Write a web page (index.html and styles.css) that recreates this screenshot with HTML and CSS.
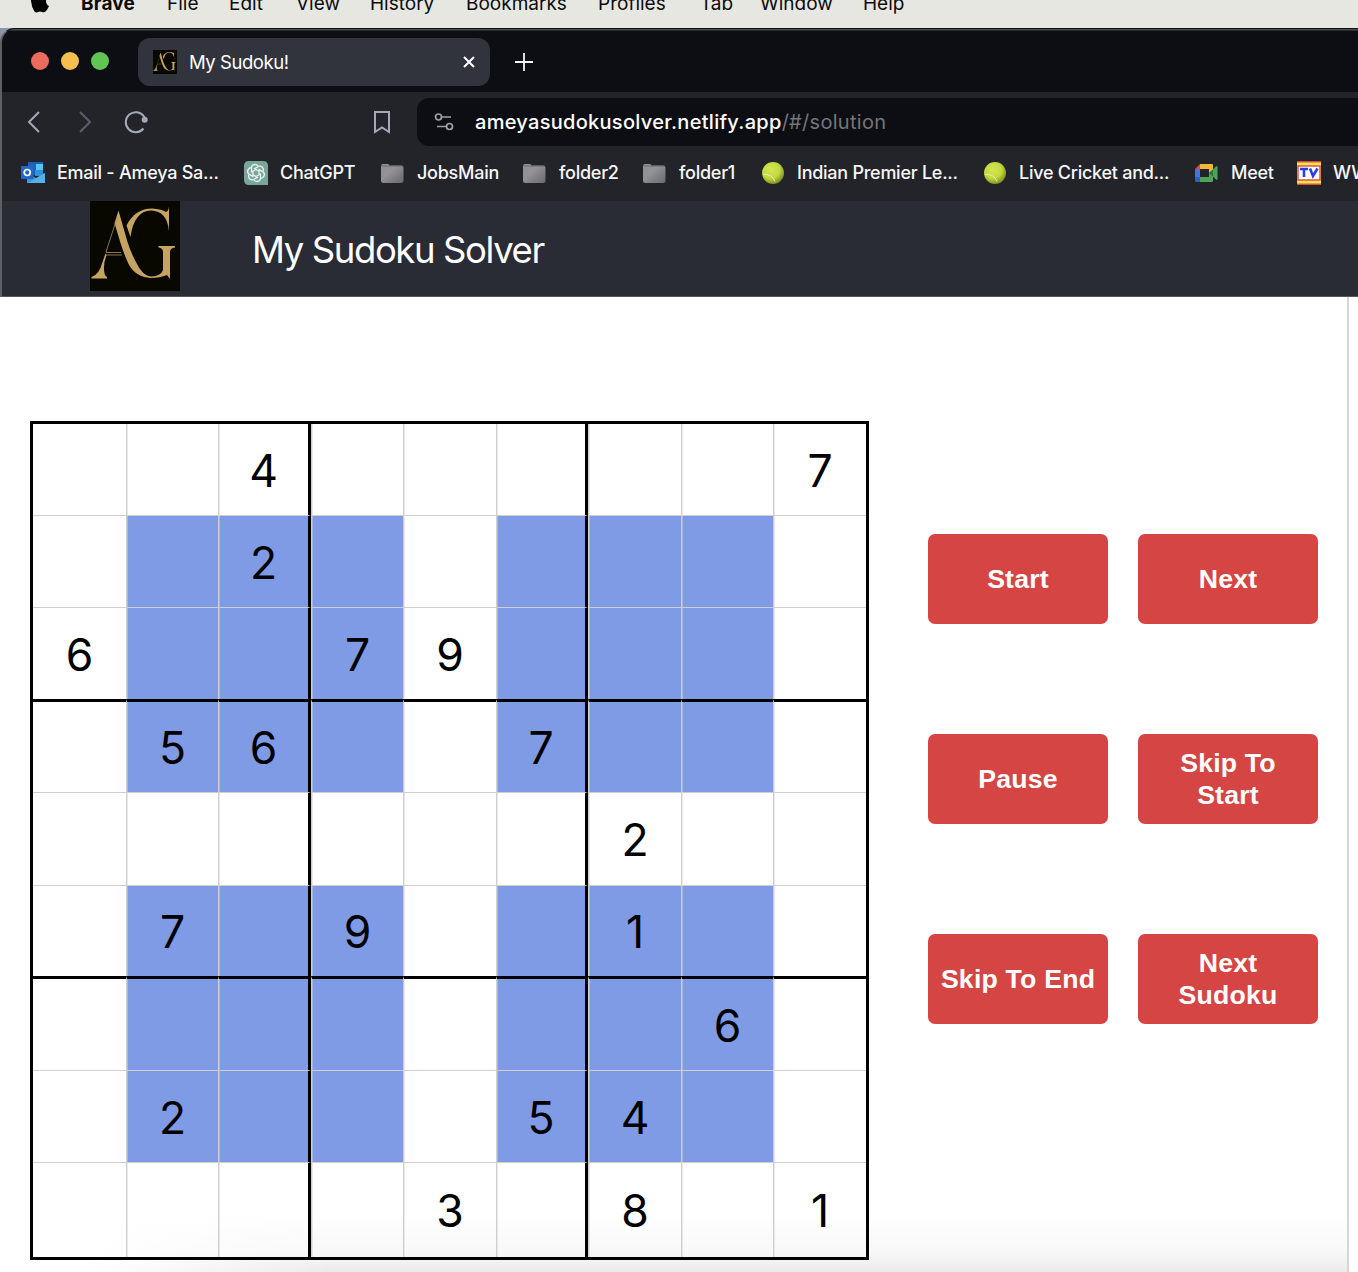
FILE: index.html
```
<!DOCTYPE html>
<html lang="en">
<head>
<meta charset="utf-8">
<title>My Sudoku!</title>
<link rel="stylesheet" href="styles.css">
</head>
<body>
<svg class="defs" width="0" height="0" aria-hidden="true">
  <defs>
    <linearGradient id="folderFill" x1="0" y1="0" x2="1" y2="1"><stop offset="0" stop-color="#8f8f94"/><stop offset=".4" stop-color="#929297"/><stop offset="1" stop-color="#69696c"/></linearGradient>
    <radialGradient id="ballFill" cx=".4" cy=".35" r=".65"><stop offset="0" stop-color="#d3e652"/><stop offset=".6" stop-color="#c4d940"/><stop offset="1" stop-color="#829321"/></radialGradient>
    <symbol id="folder" viewBox="0 0 24 24"><path d="M0 5q0-2 2-2h5q1 0 1.500 1.500H20q2.500 0 2.500 2.500v12.500q0 2.500-2.500 2.500H2.500Q0 22 0 19.500z" fill="url(#folderFill)"/><path d="M0 5h22" stroke="#5d5d61" stroke-width=".7"/></symbol>
    <symbol id="ball" viewBox="0 0 24 24"><circle cx="12" cy="12" r="11" fill="url(#ballFill)"/><path d="M2 13.500Q11 12.500 14 20.500" fill="none" stroke="#e5edb0" stroke-width="1"/></symbol>
    <symbol id="monogram" viewBox="0 0 90 90">
      <rect width="90" height="90" fill="#080800"/>
      <g fill="#c5a363">
        <path d="M28.500 9.500L37.500 41Q41 52 46.500 62Q52 74 61 76Q46 77 38.500 63Q34 53 30.500 42L24.500 22z"/>
        <path d="M1.500 76Q9 74 12.500 61L15.500 52.500L16.500 54Q13.500 62 14 69Q14.500 75 17 76V77.500H1.500z"/>
        <path d="M36.500 24.500Q45 7.500 62 7.500Q72 8 76 11Q78.500 10 79 5.500V30Q77 10 61 9.500Q44 10 40.500 36z"/>
        <path d="M68.500 45H85V46.500Q80 47 80 51V78L77 74Q70 77 60 77Q49 77 41 64Q49 76 61 75.500Q71 75 73 69V51Q73 47 68.500 46.500z"/>
      </g>
      <path d="M27 17L16 51M16 51.500H31M15 54H32" stroke="#a98f56" stroke-width=".8" fill="none"/>
    </symbol>
  </defs>
</svg>

<nav class="menubar">
  <svg class="apple" width="20" height="24" viewBox="0 0 20 24"><path d="M14 5q-2 0-4 1.200Q8 5 6 5Q1 5.500 1 12Q1.500 18 4.500 22.500Q6 24 8 23Q10 22 12 23Q14.500 24 16 22Q18 19.500 19 17Q16 15.500 16 12Q16 9 18.500 7Q17 5 14 5zM10 4Q10 0 14 0Q14 4 10 4z" fill="#000"/></svg>
  <span class="app">Brave</span><span>File</span><span>Edit</span><span>View</span><span>History</span><span>Bookmarks</span><span>Profiles</span><span>Tab</span><span>Window</span><span>Help</span>
</nav>

<div class="desktop">
<div class="window">
  <div class="tabstrip">
    <div class="lights"><i class="red"></i><i class="yellow"></i><i class="green"></i></div>
    <div class="tab">
      <svg width="24" height="24"><use href="#monogram"/></svg>
      <span class="tab-title">My Sudoku!</span>
      <svg width="12" height="12" viewBox="0 0 12 12"><path d="M1 1L11 11M11 1L1 11" stroke="#fff" stroke-width="2"/></svg>
    </div>
    <svg class="newtab" width="18" height="18" viewBox="0 0 18 18"><path d="M0 9H18M9 0V18" stroke="#f4f4f6" stroke-width="1.800"/></svg>
  </div>

  <div class="toolbar">
    <svg width="14" height="22" viewBox="0 0 14 22"><path d="M12 1L2 11L12 21" fill="none" stroke="#a4a9b7" stroke-width="2"/></svg>
    <svg class="forward" width="14" height="22" viewBox="0 0 14 22"><path d="M2 1L12 11L2 21" fill="none" stroke="#5c5f69" stroke-width="2"/></svg>
    <svg class="reload" width="24" height="24" viewBox="0 0 24 24"><path d="M19.500 18.500A10 10 0 1 1 20 6.500L21 9" fill="none" stroke="#a4a9b7" stroke-width="2"/><circle cx="20.700" cy="9.700" r="3" fill="#a4a9b7"/></svg>
    <svg class="flag" width="18" height="24" viewBox="0 0 18 24"><path d="M2 2H16V22L9 17.500L2 22z" fill="none" stroke="#a4a9b7" stroke-width="2"/></svg>
    <div class="address">
      <svg width="20" height="20" viewBox="0 0 20 20"><g fill="none" stroke="#a0a1a6" stroke-width="1.700"><circle cx="4.500" cy="5" r="3"/><path d="M8 5H17M3 14.500H12"/><circle cx="15.500" cy="14.500" r="3"/></g></svg>
      <span class="url"><b>ameyasudokusolver.netlify.app</b>/#/solution</span>
    </div>
  </div>

  <div class="bookmarks">
    <div class="bm"><svg width="24" height="24" viewBox="0 0 24 24"><path d="M7 1H22V14H7z" fill="#1d5fb5"/><path d="M7 3H15V9H7z" fill="#2263ba"/><path d="M15 3H22V9H15z" fill="#55c5f3"/><path d="M14 9H22V15H14z" fill="#2f91dd"/><path d="M6 12L15 17L24 12V22H6z" fill="#3f94dc"/><path d="M7 22L24 12V22z" fill="#56b0ea"/><rect y="5" width="12.500" height="13" rx="1" fill="#2468c5"/><circle cx="6.200" cy="11.500" r="3" fill="none" stroke="#fff" stroke-width="1.700"/></svg><span>Email - Ameya Sa...</span></div>
    <div class="bm"><svg width="24" height="24" viewBox="0 0 24 24"><path d="M5 0H19Q24 0 24 5V24H5Q0 24 0 19V5Q0 0 5 0z" fill="#7aa699"/><g fill="none" stroke="#e8f1ee" stroke-width="1.300"><g id="petal"><path d="M12 8.500L7.500 11V6.500Q8 3.500 11 3.500Q13 3.500 14 5"/></g><use href="#petal" transform="rotate(60 12 12)"/><use href="#petal" transform="rotate(120 12 12)"/><use href="#petal" transform="rotate(180 12 12)"/><use href="#petal" transform="rotate(240 12 12)"/><use href="#petal" transform="rotate(300 12 12)"/></g></svg><span>ChatGPT</span></div>
    <div class="bm"><svg width="24" height="24"><use href="#folder"/></svg><span>JobsMain</span></div>
    <div class="bm"><svg width="24" height="24"><use href="#folder"/></svg><span>folder2</span></div>
    <div class="bm"><svg width="24" height="24"><use href="#folder"/></svg><span>folder1</span></div>
    <div class="bm"><svg width="24" height="24"><use href="#ball"/></svg><span>Indian Premier Le...</span></div>
    <div class="bm"><svg width="24" height="24"><use href="#ball"/></svg><span>Live Cricket and...</span></div>
    <div class="bm"><svg width="24" height="24" viewBox="0 0 24 24"><path d="M0 8L5 3V8z" fill="#d94b3d"/><path d="M5 3H17Q18 3 18 4V12H14V8H5z" fill="#f0b73c"/><path d="M0 8H5V16H0z" fill="#3f78de"/><path d="M0 16H5V21H1Q0 21 0 20z" fill="#2d5fc4"/><path d="M5 16H14V12L18 9V20Q18 21 17 21H5z" fill="#4ea35a"/><path d="M14 12L21 5.500Q22.500 4.500 22.500 6V18Q22.500 19.500 21 18.500z" fill="#4ea35a"/><path d="M14 12L18 8.500V15.500z" fill="#2b7440"/></svg><span>Meet</span></div>
    <div class="bm"><svg width="24" height="24" viewBox="0 0 24 24"><rect width="24" height="24" fill="#f4e45c"/><path d="M0 .8H24M0 23.200H24" stroke="#dd4a36" stroke-width="1.500"/><rect x="1" y="5" width="22" height="14" fill="#fff" stroke="#e2543c" stroke-width="1.500"/><path d="M3 8H11M7 8V16M13 7.500L16 15L20.500 7.500" fill="none" stroke="#2b3fe0" stroke-width="2.600"/></svg><span>WWE</span></div>
  </div>

  <header class="site-header">
    <svg width="90" height="90"><use href="#monogram"/></svg>
    <h1>My Sudoku Solver</h1>
  </header>
</div>
</div>

<main class="page">
  <div class="board" id="board"></div>
  <div class="controls">
    <button>Start</button><button>Next</button>
    <button>Pause</button><button>Skip To Start</button>
    <button>Skip To End</button><button>Next Sudoku</button>
  </div>
</main>
<script src="board.js"></script>
</body>
</html>
```
FILE: styles.css
```
* { box-sizing: border-box; }
body { margin: 0; width: 1358px; height: 1272px; overflow: hidden; background: #fff; font-family: Inter, "Liberation Sans", sans-serif; display: flex; flex-direction: column; }
svg { display: block; flex: none; }
.defs { position: absolute; }

.menubar { height: 28px; flex: none; overflow: hidden; background: #e7e7e1; padding-left: 29px; display: grid; grid-template-columns: 52px 86px 62px 67px 74px 96px 132px 102px 60px 103px 80px; align-items: start; color: #0b0b0b; font-size: 19px; line-height: 24px; white-space: nowrap; }
.menubar span { margin-top: -8px; }
.menubar .app { font-weight: 700; letter-spacing: .2px; }
.apple { margin-top: -11px; margin-left: 1px; }

.desktop { flex: none; height: 269px; background: linear-gradient(#8d99ab, #5b5e66 40px); }
.window { height: 269px; border-top: 1px solid #111; border-left: 2px solid #5e5f63; border-top-left-radius: 15px; background: #0d0e13; overflow: hidden; }

.tabstrip { height: 63px; display: flex; align-items: center; padding-left: 29px; box-shadow: inset 0 1.500px 0 #4a4b50; }
.lights { display: flex; gap: 12px; width: 107px; }
.lights i { width: 18px; height: 18px; border-radius: 50%; }
.red { background: #ed6a5f; }
.yellow { background: #f5bf4f; }
.green { background: #61c554; }
.tab { width: 352px; height: 48px; border-radius: 12px; background: #31333d; display: flex; align-items: center; padding: 0 15px; margin-top: 3px; }
.tab-title { color: #fff; font-size: 18.500px; letter-spacing: -.45px; margin-left: 12px; flex: 1; }
.newtab { margin: 3px 0 0 25px; }

.toolbar { height: 54px; background: #23242a; display: flex; align-items: center; padding: 6px 0 0 25px; }
.forward { margin-left: 37px; }
.reload { margin-left: 32px; }
.flag { margin-left: 225px; }
.address { margin-left: 26px; flex: 1; height: 48px; border-radius: 12px 0 0 12px; background: #0d0e13; display: flex; align-items: center; padding-left: 17px; }
.url { margin-left: 21px; font-size: 20px; letter-spacing: .29px; color: #74757a; white-space: nowrap; }
.url b { color: #fff; font-weight: 500; }

.bookmarks { height: 55px; background: #23242a; display: grid; grid-template-columns: 223px 137px 142px 120px 118px 222px 212px 102px 100px; padding: 0 0 2px 19px; align-items: center; }
.bm { display: flex; align-items: center; gap: 12px; color: #f7f7f8; font-size: 18px; font-weight: 500; letter-spacing: -.26px; white-space: nowrap; }
.bm span { margin-top: -1px; }

.site-header { height: 96px; background: #2a2c35; border-bottom: 1px solid #55575d; padding-left: 88px; display: flex; align-items: flex-start; }
.site-header h1 { margin: 26px 0 0 72px; color: #fff; font-size: 36.500px; letter-spacing: -1.400px; line-height: 46px; font-weight: 400; }

.page { flex: none; height: 975px; width: 1349px; border-right: 2px solid #d6d6d6; padding: 124px 0 0 30px; display: flex; align-items: flex-start; background: linear-gradient(to right, #fff 90px, #fff0 330px), linear-gradient(#fff 915px, #f8f8f8 955px, #ebebeb); }
.board { width: 839px; height: 839px; border: 3px solid #000; display: grid; grid-template-columns: 93px 92px 93px 92px 93px 92px 93px 92px 93px; grid-template-rows: 91px 92px 92px 93px 93px 91px 94px 92px 95px; }
.cell { border-left: 1px solid #cfcfcf; border-top: 1px solid #cfcfcf; box-shadow: inset 1px 0 0 #d3d3d380; padding-top: 3px; display: flex; align-items: center; justify-content: center; font-size: 44.500px; line-height: 1; color: #000; }
.shade { background-color: #809be5; }
.first-col { border-left: 0; box-shadow: none; }
.first-row { border-top: 0; }
.box-top { border-top: 3px solid #000; }
.box-right { border-right: 3px solid #000; }

.controls { margin: 113px 0 0 59px; display: grid; grid-template-columns: 180px 180px; grid-auto-rows: 90px; column-gap: 30px; row-gap: 110px; }
.controls button { border: 0; border-radius: 7px; background: #d54543; color: #fff; font: bold 26.670px/31.500px "Liberation Sans", Arial, sans-serif; letter-spacing: .2px; padding: 1px 10px 0; }
```
FILE: board.js
```
// Digits by row; a dot is an empty cell.
const puzzle = [
  "..4.....7",
  "..2......",
  "6..79....",
  ".56..7...",
  "......2..",
  ".7.9..1..",
  ".......6.",
  ".2...54..",
  "....3.8.1"
];
// Rows and columns that cross in the shaded cells.
const shadedRows = [1, 2, 3, 5, 6, 7];
const shadedCols = [1, 2, 3, 5, 6, 7];
const board = document.getElementById("board");
puzzle.forEach((line, r) => {
  [...line].forEach((digit, c) => {
    const cell = document.createElement("div");
    cell.className = "cell";
    if (c === 0) cell.classList.add("first-col");
    if (r === 0) cell.classList.add("first-row");
    if (r === 3 || r === 6) cell.classList.add("box-top");
    if (c === 2 || c === 5) cell.classList.add("box-right");
    if (shadedRows.includes(r) && shadedCols.includes(c)) cell.classList.add("shade");
    if (digit !== ".") cell.textContent = digit;
    board.appendChild(cell);
  });
});
```
